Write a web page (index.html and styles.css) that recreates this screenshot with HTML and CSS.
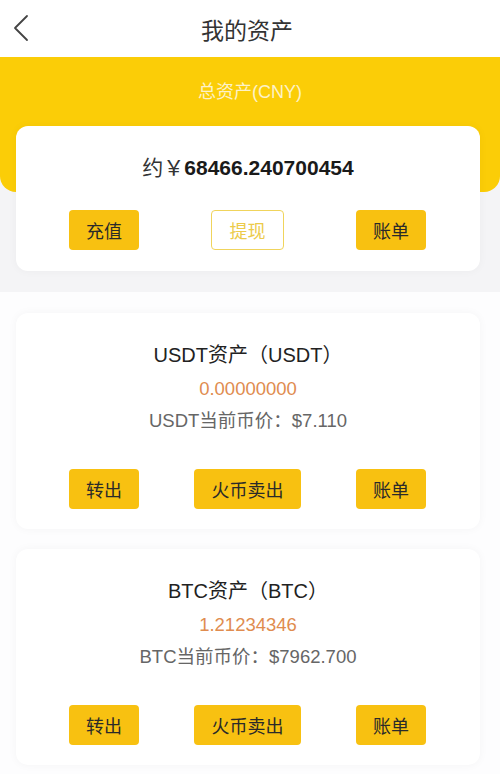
FILE: index.html
```html
<!DOCTYPE html>
<html>

<head>
  <meta charset="utf-8">
  <title>我的资产</title>
  <link rel="stylesheet" href="styles.css">
</head>

<body>
  <div class="header">
    <a class="back" href="#">
      <svg width="16" height="28" viewBox="0 0 16 28">
        <polyline points="14,2 2,14 14,26" fill="none" stroke="#444" stroke-width="1.8" stroke-linecap="round" stroke-linejoin="round" />
      </svg>
    </a>
    <h1 class="title">我的资产</h1>
  </div>

  <div class="summary">
    <div class="band">
      <p class="band-label">总资产(CNY)</p>
    </div>
    <div class="card total-card">
      <p class="total">约￥<b>68466.240700454</b></p>
      <div class="actions">
        <a class="btn">充值</a>
        <a class="btn btn-outline">提现</a>
        <a class="btn">账单</a>
      </div>
    </div>
  </div>

  <div class="list">
    <div class="card coin-card">
      <p class="coin-name">USDT资产（USDT）</p>
      <p class="coin-amount">0.00000000</p>
      <p class="coin-price">USDT当前币价：$7.110</p>
      <div class="actions">
        <a class="btn">转出</a>
        <a class="btn btn-wide">火币卖出</a>
        <a class="btn">账单</a>
      </div>
    </div>

    <div class="card coin-card">
      <p class="coin-name">BTC资产（BTC）</p>
      <p class="coin-amount">1.21234346</p>
      <p class="coin-price">BTC当前币价：$7962.700</p>
      <div class="actions">
        <a class="btn">转出</a>
        <a class="btn btn-wide">火币卖出</a>
        <a class="btn">账单</a>
      </div>
    </div>
  </div>
</body>

</html>
```

FILE: styles.css
```css
* {
  box-sizing: border-box;
}

body {
  margin: 0;
  background-color: #fdfdfe;
  font-family: "Liberation Sans", "Noto Sans CJK SC", sans-serif;
  color: #222;
}

p {
  margin: 0;
}

/* top bar */
.header {
  position: relative;
  height: 57px;
  display: flex;
  justify-content: center;
  align-items: center;
  background-color: #fff;
}

.back {
  position: absolute;
  left: 13px;
  top: 14px;
}

.title {
  margin: 0 6px 0 0;
  font-size: 23px;
  font-weight: normal;
  color: #333;
}

/* total assets */
.summary {
  background-color: #f4f4f6;
  padding-bottom: 21px;
}

.band {
  height: 135px;
  padding-top: 23px;
  background-color: #fbcd07;
  border-radius: 0 0 16px 16px;
}

.band-label {
  text-align: center;
  font-size: 18px;
  line-height: 24px;
  color: #fdf2c8;
}

.card {
  margin: 0 20px 0 16px;
  background-color: #fff;
  border-radius: 12px;
  box-shadow: 0 0 10px rgba(0, 0, 0, 0.04);
}

.total-card {
  margin-top: -66px;
  padding: 28px 0 21px;
  position: relative;
}

.total {
  text-align: center;
  font-size: 21px;
  line-height: 28px;
  color: #333;
}

.total b {
  color: #1a1a1a;
}

.actions {
  display: flex;
  justify-content: space-between;
  padding: 0 54px 0 53px;
  margin-top: 28px;
}

.btn {
  width: 70px;
  height: 40px;
  display: flex;
  justify-content: center;
  align-items: center;
  background-color: #f8c111;
  border-radius: 4px;
  font-size: 18px;
  color: #2a2a2a;
}

.btn-outline {
  width: 73px;
  background-color: #fff;
  border: 1.5px solid #f0d45c;
  color: #eccb4a;
}

.btn-wide {
  width: 107px;
}

/* coin list */
.list {
  padding-top: 21px;
}

.coin-card {
  padding: 29px 0 20px;
  margin-bottom: 20px;
}

.coin-name {
  text-align: center;
  font-size: 20px;
  line-height: 26px;
  color: #222;
}

.coin-amount {
  margin-top: 8px;
  text-align: center;
  font-size: 18.5px;
  line-height: 26px;
  color: #e08c4f;
}

.coin-price {
  margin-top: 6px;
  text-align: center;
  font-size: 18.5px;
  line-height: 26px;
  color: #666;
}

.coin-card .actions {
  margin-top: 35px;
}
```
